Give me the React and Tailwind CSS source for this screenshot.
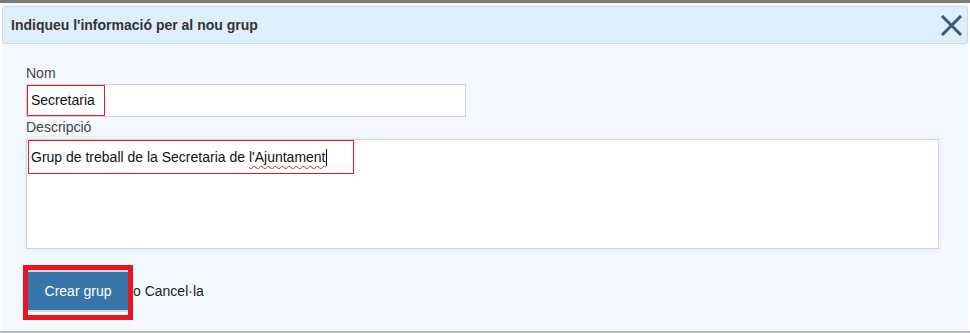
import React from 'react';

function CloseIcon() {
  return (
    <svg width="21" height="21" viewBox="0 0 21 21" className="block">
      <path d="M2 2 L19 19 M19 2 L2 19" stroke="#3d5878" strokeWidth="3" strokeLinecap="square" />
    </svg>
  );
}

function App() {
  return (
    <div className="w-[970px] h-[333px] bg-white flex flex-col font-['Liberation_Sans',Arial,sans-serif] overflow-hidden">
      <div className="h-[3px] bg-[#7c7c7c] shrink-0" />
      <div className="flex-1 mx-[2px] bg-[#f3f8fe] pt-[3px] flex flex-col">
        {/* header */}
        <div className="h-[38px] border border-[#cdd9e4] rounded-[3px] bg-[#ddeefc] pl-[8px] pr-[5px] flex items-center justify-between">
          <span className="text-[14px] font-bold text-[#333]">Indiqueu l'informació per al nou grup</span>
          <CloseIcon />
        </div>

        {/* form */}
        <div className="pl-[24px] pr-[29px] pt-[21px] flex flex-col">
          <span className="text-[14px] leading-[16px] text-[#444]">Nom</span>
          <div className="mt-[3px] w-[440px] h-[33px] bg-white border border-[#d2d2d2] flex items-stretch">
            <span className="w-[78px] border border-[#e31b23] flex items-center pl-[3px] text-[14px] text-[#111]">
              Secretaria
            </span>
          </div>
          <span className="mt-[2px] text-[14px] leading-[16px] text-[#444]">Descripció</span>
          <div className="mt-[4px] h-[110px] bg-white border border-[#d6d6d6] shadow-[0_0_5px_rgba(0,0,0,0.07)] pl-[1px] flex items-start">
            <div className="w-[326px] h-[34px] border border-[#e31b23] flex items-center pl-[2px] text-[14px] text-[#111] whitespace-nowrap">
              <span>Grup de treball de la Secretaria de&nbsp;</span>
              <span className="underline decoration-wavy decoration-[#e31b23] decoration-1 underline-offset-[3px]">l'Ajuntament</span>
              <span className="w-px h-[17px] bg-black" />
            </div>
          </div>

          <div className="mt-[16px] flex items-center">
            <div className="ml-[-3px] w-[110px] h-[55px] border-[5px] border-[#e8161e] bg-white flex flex-col">
              <div className="h-[2px] bg-[#d5d9de]" />
              <button className="h-[38px] bg-[#3775aa] text-white text-[14px] flex items-center justify-center">
                Crear grup
              </button>
              <div className="h-[2px] bg-[#d5d9de]" />
            </div>
            <span className="text-[14px] text-[#222] -mt-[3px]">o Cancel·la</span>
          </div>
        </div>
      </div>
      <div className="h-[2px] bg-[#b9b9b9] shrink-0" />
    </div>
  );
}

export default App;
